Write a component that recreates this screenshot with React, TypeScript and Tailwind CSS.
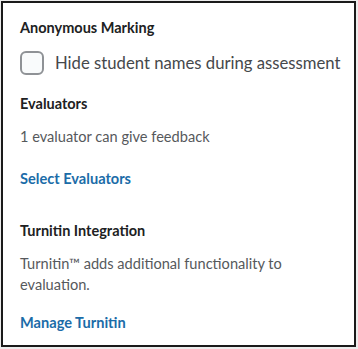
export default function App() {
  return (
    <div className="h-[349px] w-[358px] bg-[#ececec] pl-[1px] pt-[1px] font-['Lato',sans-serif]">
      <div className="h-[346px] w-[355px] border-2 border-[#1a1a1a] bg-white px-[17px] pt-[15px]">
        {/* Anonymous Marking */}
        <h3 className="text-[14.5px] font-bold leading-[20px] text-[#202122]">Anonymous Marking</h3>
        <label className="mt-[13px] flex items-center gap-[11px]">
          <span className="h-[24px] w-[24px] shrink-0 rounded-[6px] border-2 border-[#8f9296] bg-[#f9fbfc]" />
          <span className="whitespace-nowrap text-[16.7px] leading-[24px] text-[#45484b]">
            Hide student names during assessment
          </span>
        </label>

        {/* Evaluators */}
        <h3 className="mt-[19px] text-[14.5px] font-bold leading-[20px] text-[#202122]">Evaluators</h3>
        <p className="mt-[13px] text-[14.6px] leading-[20px] text-[#56595c]">1 evaluator can give feedback</p>
        <a className="mt-[22px] block text-[14.6px] font-bold leading-[20px] text-[#1b6ca8]">Select Evaluators</a>

        {/* Turnitin */}
        <h3 className="mt-[32px] text-[14.5px] font-bold leading-[20px] text-[#202122]">Turnitin Integration</h3>
        <p className="mt-[12px] pr-[40px] text-[14.6px] leading-[21px] text-[#56595c]">
          Turnitin™ adds additional functionality to evaluation.
        </p>
        <a className="mt-[18px] block text-[14.6px] font-bold leading-[20px] text-[#1b6ca8]">Manage Turnitin</a>
      </div>
    </div>
  )
}
